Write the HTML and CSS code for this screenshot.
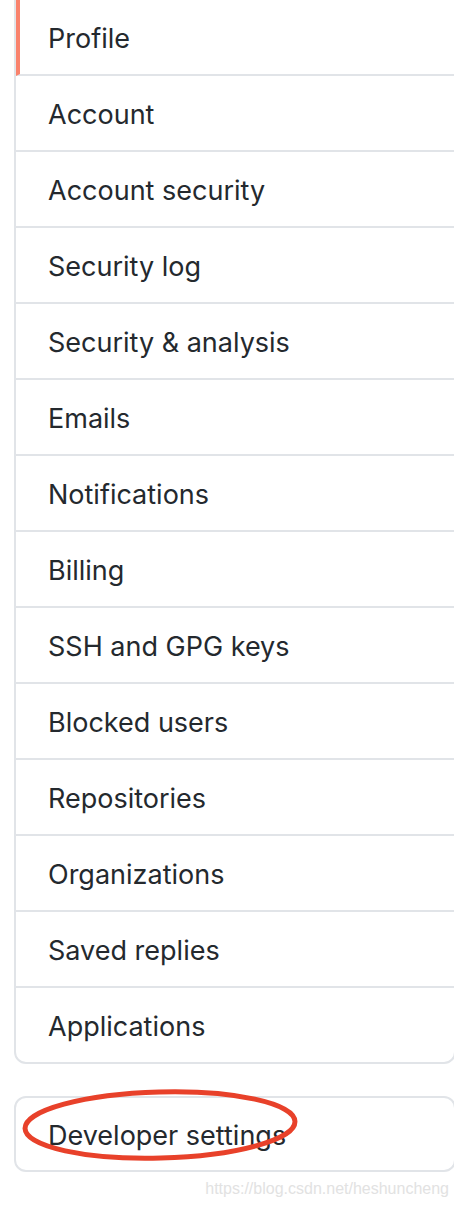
FILE: index.html
```html
<!DOCTYPE html>
<html lang="en">
<head>
    <meta charset="UTF-8">
    <meta name="viewport" content="width=device-width, initial-scale=1.0">
    <title>Settings</title>
    <link rel="stylesheet" href="styles.css">
</head>
<body>
    <div class="sidebar">
        <nav class="menu main-menu">
            <a class="menu-item selected" href="#">Profile</a>
            <a class="menu-item" href="#">Account</a>
            <a class="menu-item" href="#">Account security</a>
            <a class="menu-item" href="#">Security log</a>
            <a class="menu-item" href="#">Security &amp; analysis</a>
            <a class="menu-item" href="#">Emails</a>
            <a class="menu-item" href="#">Notifications</a>
            <a class="menu-item" href="#">Billing</a>
            <a class="menu-item" href="#">SSH and GPG keys</a>
            <a class="menu-item" href="#">Blocked users</a>
            <a class="menu-item" href="#">Repositories</a>
            <a class="menu-item" href="#">Organizations</a>
            <a class="menu-item" href="#">Saved replies</a>
            <a class="menu-item" href="#">Applications</a>
        </nav>

        <nav class="menu dev-menu">
            <a class="menu-item" href="#">Developer settings</a>
            <!-- hand-drawn mark around the item -->
            <svg class="circle-mark" width="290" height="80" viewBox="0 0 290 80">
                <ellipse cx="144" cy="38" rx="135" ry="33" fill="none" stroke="#e8412a" stroke-width="5" transform="rotate(-1.5 144 38)"/>
            </svg>
        </nav>

        <div class="watermark">https://blog.csdn.net/heshuncheng</div>
    </div>
</body>
</html>
```

FILE: styles.css
```css
body {
    font-family: Inter, "Liberation Sans", Arial, sans-serif;
    background-color: #fff;
    margin: 0;
    padding: 0;
}

.sidebar {
    margin-top: -2px;
    padding-left: 14px;
    width: 442px;
}

.menu {
    border: 2px solid #e1e4e8;
    border-radius: 12px;
    margin-bottom: 32px;
}

/* top of the list is cut off in the shot */
.main-menu {
    border-top-left-radius: 0;
    border-top-right-radius: 0;
}

.menu-item {
    display: block;
    height: 74px;
    line-height: 77px;
    padding-left: 32px;
    border-bottom: 2px solid #e1e4e8;
    color: #24292e;
    font-size: 27px;
    text-decoration: none;
    overflow: hidden;
}

.menu-item:last-child {
    border-bottom: none;
}

.menu-item.selected {
    border-left: 4px solid #f9826c;
    padding-left: 28px;
}

.dev-menu {
    position: relative;
    margin-bottom: 0;
}

.dev-menu .menu-item {
    height: 72px;
    line-height: 76px;
    border-bottom: none;
}

.circle-mark {
    position: absolute;
    left: 0;
    top: -11px;
}

.watermark {
    text-align: right;
    padding-right: 7px;
    margin-top: 8px;
    font-family: "Liberation Sans", Arial, sans-serif;
    font-size: 16px;
    color: #e2e2e2;
}
```
